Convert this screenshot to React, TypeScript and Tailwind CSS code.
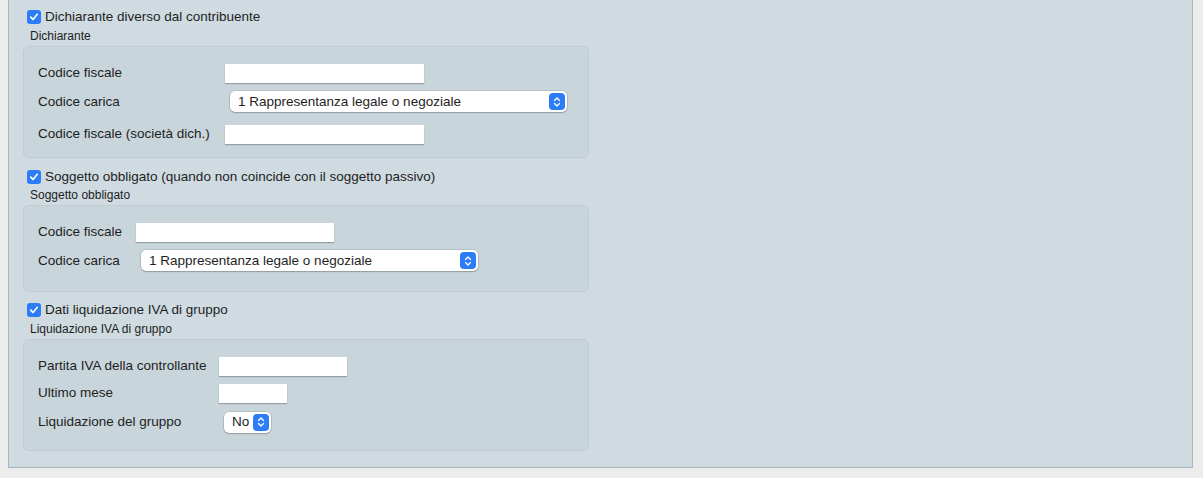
const font = { fontFamily: '"Liberation Sans", Arial, sans-serif' };

const Check = () => (
  <span className="flex h-[14px] w-[14px] items-center justify-center rounded-[3px] bg-[#2b7cf6]">
    <svg width="10" height="10" viewBox="0 0 10 10" fill="none">
      <path d="M1.8 5.2 L4 7.5 L8.3 2.3" stroke="white" strokeWidth="1.7" strokeLinecap="round" strokeLinejoin="round" />
    </svg>
  </span>
);

const Stepper = () => (
  <span className="flex h-[17px] w-[16px] items-center justify-center rounded-[4px] bg-[#2b7cf6]">
    <svg width="8" height="12" viewBox="0 0 8 12" fill="none">
      <path d="M1.5 4.5 L4 2 L6.5 4.5 M1.5 7.5 L4 10 L6.5 7.5" stroke="white" strokeWidth="1.4" strokeLinecap="round" strokeLinejoin="round" />
    </svg>
  </span>
);

const CheckRow = ({ text, mt }: { text: string; mt: string }) => (
  <div className={`flex h-[14px] items-center gap-[4px] pl-[18px] ${mt}`}>
    <Check />
    <span className="text-[13.5px] text-[#1e1e1e]">{text}</span>
  </div>
);

const Caption = ({ text, h }: { text: string; h: string }) => (
  <div className={`flex items-center pl-[21px] pt-[1px] text-[12px] text-[#1e1e1e] ${h}`}>{text}</div>
);

const Input = ({ w }: { w: string }) => (
  <div className={`h-[19px] bg-white shadow-[0_1px_1px_rgba(0,0,0,0.25)] ${w}`} />
);

const Select = ({ w, value }: { w: string; value: string }) => (
  <div
    className={`ml-[5px] flex h-[21px] items-center justify-between rounded-[5px] bg-white pl-[8px] pr-[2px] shadow-[0_0_0_0.5px_rgba(0,0,0,0.18),0_1px_1.5px_rgba(0,0,0,0.2)] ${w}`}
  >
    <span className="text-[13.5px] text-[#1e1e1e]">{value}</span>
    <Stepper />
  </div>
);

const Row = ({ label, col, mt, children }: { label: string; col: string; mt: string; children: React.ReactNode }) => (
  <div className={`flex items-center ${mt}`}>
    <span className={`shrink-0 text-[13.5px] text-[#1e1e1e] ${col}`}>{label}</span>
    {children}
  </div>
);

const Box = ({ h, children }: { h: string; children: React.ReactNode }) => (
  <div className={`ml-[14px] w-[566px] rounded-[6px] border border-[#bfcbd1] bg-[#c8d5db] pl-[14px] pt-[16px] ${h}`}>
    {children}
  </div>
);

export default function App() {
  return (
    <div className="h-[478px] w-[1203px] bg-[#ececec]" style={font}>
      <div className="ml-[8px] h-[468px] w-[1185px] border-x border-b border-[#a9b5bb] bg-[#cfdbe1] pt-[10px]">
        <CheckRow text="Dichiarante diverso dal contribuente" mt="mt-0" />
        <Caption text="Dichiarante" h="h-[22px]" />
        <Box h="h-[112px]">
          <Row label="Codice fiscale" col="w-[187px]" mt="mt-0">
            <Input w="w-[199px]" />
          </Row>
          <Row label="Codice carica" col="w-[187px]" mt="mt-[8px]">
            <Select w="w-[337px]" value="1 Rappresentanza legale o negoziale" />
          </Row>
          <Row label="Codice fiscale (società dich.)" col="w-[187px]" mt="mt-[12px]">
            <Input w="w-[199px]" />
          </Row>
        </Box>

        <CheckRow text="Soggetto obbligato (quando non coincide con il soggetto passivo)" mt="mt-[12px]" />
        <Caption text="Soggetto obbligato" h="h-[21px]" />
        <Box h="h-[87px]">
          <Row label="Codice fiscale" col="w-[98px]" mt="mt-0">
            <Input w="w-[198px]" />
          </Row>
          <Row label="Codice carica" col="w-[98px]" mt="mt-[8px]">
            <Select w="w-[337px]" value="1 Rappresentanza legale o negoziale" />
          </Row>
        </Box>

        <CheckRow text="Dati liquidazione IVA di gruppo" mt="mt-[11px]" />
        <Caption text="Liquidazione IVA di gruppo" h="h-[22px]" />
        <Box h="h-[112px]">
          <Row label="Partita IVA della controllante" col="w-[181px]" mt="mt-0">
            <Input w="w-[128px]" />
          </Row>
          <Row label="Ultimo mese" col="w-[181px]" mt="mt-[7px]">
            <Input w="w-[68px]" />
          </Row>
          <Row label="Liquidazione del gruppo" col="w-[181px]" mt="mt-[8px]">
            <Select w="w-[47px]" value="No" />
          </Row>
        </Box>
      </div>
    </div>
  );
}
